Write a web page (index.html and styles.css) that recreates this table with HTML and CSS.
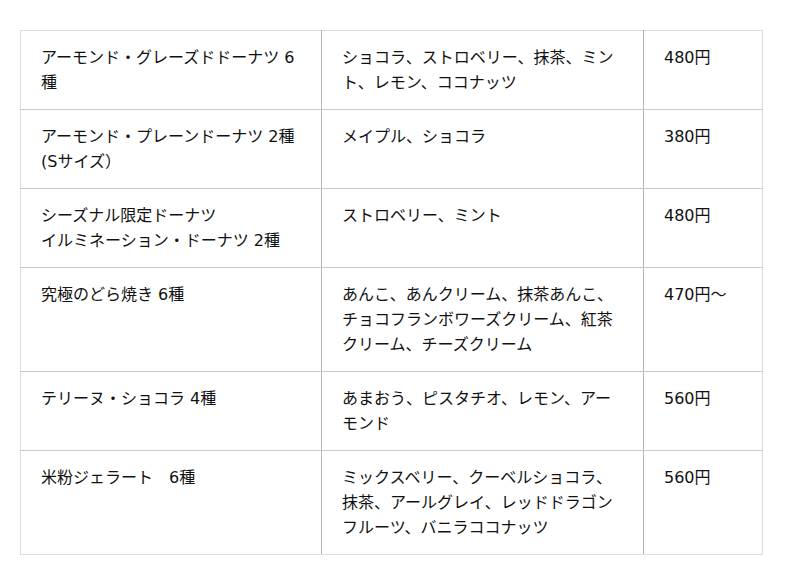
FILE: index.html
```html
<!DOCTYPE html>
<html lang="ja">
<head>
<meta charset="utf-8">
<link rel="stylesheet" href="styles.css">
</head>
<body>
<div class="wrap">
<table class="menu">
<colgroup><col class="c1"><col class="c2"><col class="c3"></colgroup>
<tbody>
<tr><td>アーモンド・グレーズドドーナツ 6種</td><td>ショコラ、ストロベリー、抹茶、ミント、レモン、ココナッツ</td><td>480円</td></tr>
<tr><td>アーモンド・プレーンドーナツ 2種(Sサイズ）</td><td>メイプル、ショコラ</td><td>380円</td></tr>
<tr><td>シーズナル限定ドーナツ<br>イルミネーション・ドーナツ 2種</td><td>ストロベリー、ミント</td><td>480円</td></tr>
<tr><td>究極のどら焼き 6種</td><td>あんこ、あんクリーム、抹茶あんこ、チョコフランボワーズクリーム、紅茶クリーム、チーズクリーム</td><td>470円～</td></tr>
<tr><td>テリーヌ・ショコラ 4種</td><td>あまおう、ピスタチオ、レモン、アーモンド</td><td>560円</td></tr>
<tr><td>米粉ジェラート　6種</td><td>ミックスベリー、クーベルショコラ、抹茶、アールグレイ、レッドドラゴンフルーツ、バニラココナッツ</td><td>560円</td></tr>
</tbody>
</table>
</div>
</body>
</html>
```

FILE: styles.css
```css
html, body {
  margin: 0;
  padding: 0;
  background: #fff;
}
.wrap {
  padding: 30px 20px;
}
.menu {
  width: 742px;
  border-collapse: collapse;
  table-layout: fixed;
  font-family: "DejaVu Sans", "Noto Sans CJK JP", sans-serif;
  font-size: 16px;
  line-height: 25px;
  color: #111;
  border: 1px solid #dcdcdc;
}
.c1 { width: 301px; }
.c2 { width: 322px; }
.c3 { width: 119px; }
.menu td {
  vertical-align: top;
  padding: 14px 20px;
  border-bottom: 1px solid #c8c8c8;
  border-right: 1px solid #b4b4b4;
  word-break: normal;
}
.menu td:last-child {
  border-right: 1px solid #dcdcdc;
}
.menu tr:last-child td {
  border-bottom: 1px solid #dcdcdc;
}
```
